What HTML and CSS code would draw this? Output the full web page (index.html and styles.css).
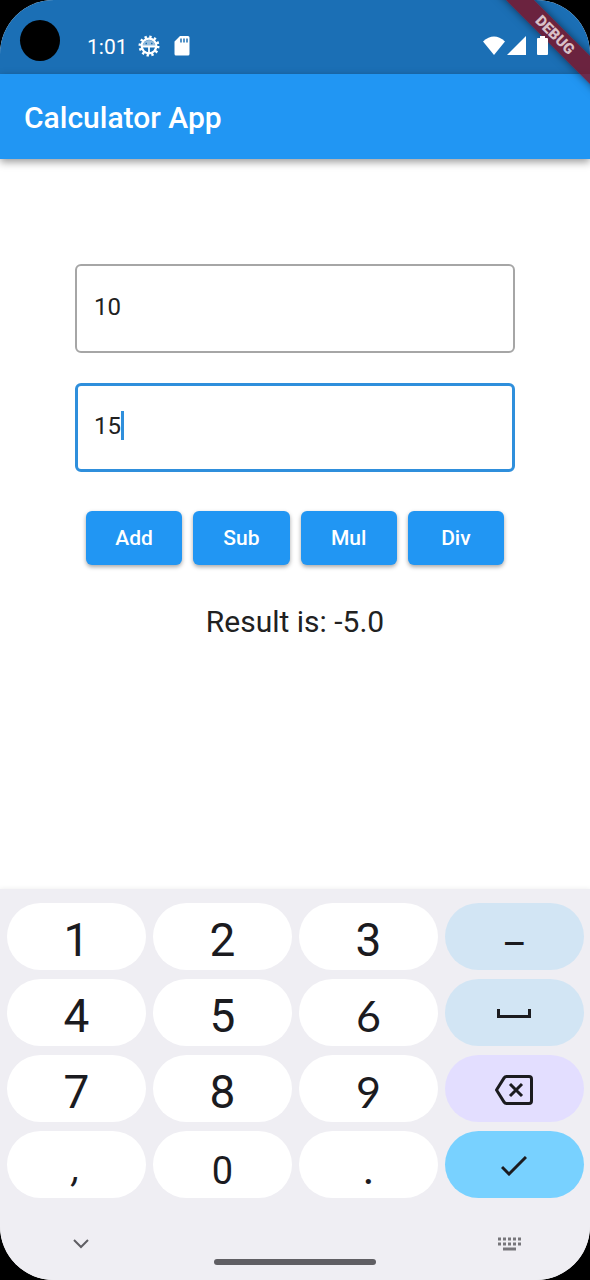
FILE: index.html
```html
<!DOCTYPE html>
<html lang="en">
<head>
<meta charset="utf-8">
<meta name="viewport" content="width=device-width, initial-scale=1">
<title>Calculator App</title>
<link rel="stylesheet" href="styles.css">
</head>
<body>
<div class="screen">
  <div class="status">
    <span class="camera"></span>
    <span class="time">1:01</span>
    <svg class="gear" viewBox="0 0 22 22" width="22" height="22" fill="none" stroke="#fff">
      <circle cx="11" cy="11" r="9" stroke-width="3" stroke-dasharray="2.3 2.412"/>
      <circle cx="11" cy="11" r="7.3" stroke-width="2.200"/>
      <path d="M4 11.500h14M11 11v7" stroke-width="1.8"/>
      <path fill="#fff" fill-opacity=".55" stroke="none" d="M4.500 11.500a6.500 6.500 0 0 1 13 0z"/>
      <path stroke="#1b6fb5" d="M7.500 8.500h1.500M13 8.500h1.500" stroke-width="1.3"/>
    </svg>
    <svg class="card" viewBox="0 0 16 20" width="16" height="20">
      <path fill="#fff" d="M6 0h8a1.500 1.500 0 0 1 1.500 1.500v16.500a1.500 1.500 0 0 1-1.500 1.500H2A1.500 1.500 0 0 1 .5 18V5.500z"/>
      <path stroke="#1b6fb5" stroke-width="1.500" d="M7 2.500v4M10 2.500v4M13 2.500v4"/>
    </svg>
    <span class="signals">
      <svg viewBox="0 0 22 20" width="22" height="20" fill="#fff"><path d="M0 5.500Q11-4.500 22 5.500L11 19z"/></svg>
      <svg viewBox="0 0 19 20" width="19" height="20" fill="#fff"><path d="M19 0v19H0z"/></svg>
      <svg class="battery" viewBox="0 0 11 20" width="11" height="20" fill="#fff"><path d="M3 0h5v2h2q1 0 1 1v15q0 1-1 1H1q-1 0-1-1V3q0-1 1-1h2z"/></svg>
    </span>
  </div>
  <header class="appbar"><h1>Calculator App</h1></header>
  <span class="debug">DEBUG</span>

  <main class="content">
    <div class="field">
      <input class="box" type="text" inputmode="decimal" value="10" aria-label="First number">
    </div>
    <div class="field">
      <input class="box box-active" type="text" inputmode="decimal" value="15" aria-label="Second number">
      <span class="caret"></span>
    </div>
    <div class="actions">
      <button class="action" type="button">Add</button>
      <button class="action" type="button">Sub</button>
      <button class="action" type="button">Mul</button>
      <button class="action" type="button">Div</button>
    </div>
    <p class="result">Result is: -5.0</p>
  </main>

  <section class="keyboard">
    <div class="keys">
      <button class="key" type="button">1</button>
      <button class="key" type="button">2</button>
      <button class="key" type="button">3</button>
      <button class="key key-blue key-minus" type="button">–</button>
      <button class="key" type="button">4</button>
      <button class="key" type="button">5</button>
      <button class="key key-slant" type="button">6</button>
      <button class="key key-blue key-icon" type="button" aria-label="Space">
        <svg viewBox="0 0 34 10" width="34" height="10" fill="none" stroke="#1b1b1f" stroke-width="3"><path d="M1.500 0v7.500h31V0"/></svg>
      </button>
      <button class="key" type="button">7</button>
      <button class="key" type="button">8</button>
      <button class="key key-slant" type="button">9</button>
      <button class="key key-lilac key-icon" type="button" aria-label="Backspace">
        <svg viewBox="0 0 38 30" width="38" height="30" fill="none" stroke="#1b1b1f" stroke-width="3"><path stroke-linejoin="round" d="M11.500 1.500H34q2.500 0 2.500 2.500v22q0 2.500-2.500 2.500H11.500q-1.500 0-2.400-1.400L1.500 15 9.100 2.900q.9-1.400 2.400-1.400z"/><path d="M15 9l12 12M27 9L15 21"/></svg>
      </button>
      <button class="key key-comma" type="button">,</button>
      <button class="key key-zero" type="button">0</button>
      <button class="key" type="button">.</button>
      <button class="key key-enter key-icon" type="button" aria-label="Done">
        <svg viewBox="0 0 26 20" width="26" height="20" fill="none" stroke="#1b1b1f" stroke-width="3"><path d="M1 11l7 7L25 1"/></svg>
      </button>
    </div>
    <div class="nav">
      <button class="nav-btn" type="button" aria-label="Hide keyboard">
        <svg viewBox="0 0 16 10" width="16" height="10" fill="none" stroke="#5f5e63" stroke-width="2"><path d="M1 1l7 7 7-7"/></svg>
      </button>
      <span class="home"></span>
      <button class="nav-btn nav-right" type="button" aria-label="Choose input method">
        <svg viewBox="0 0 23 14" width="23" height="14" fill="none" stroke="#77767b" stroke-width="3"><path stroke-dasharray="3 2" d="M0 2h23M0 7h23"/><path d="M5 12h13"/></svg>
      </button>
    </div>
  </section>
</div>
</body>
</html>
```

FILE: styles.css
```css
* { box-sizing: border-box; }
body {
  margin: 0;
  background: #000;
  font-family: Roboto, "Liberation Sans", sans-serif;
  color: #212121;
}
button, input { font: inherit; color: inherit; margin: 0; }
button { border: 0; padding: 0; cursor: pointer; }
svg { display: block; }

.screen {
  position: relative;
  display: flex;
  flex-direction: column;
  min-height: 100vh;
  overflow: hidden;
  border-radius: 54px;
  background: #fff;
}

.status {
  display: flex;
  align-items: center;
  height: 74px;
  padding: 18px 42px 0 87px;
  background: #1b6fb5;
  color: #fff;
}
.camera {
  position: absolute;
  top: 20px;
  left: 20px;
  width: 40px;
  height: 41px;
  border-radius: 50%;
  background: #000;
}
.time { padding-top: 2px; font-size: 21px; line-height: 28px; }
.gear { margin-left: 10px; }
.card { margin-left: 14px; }
.signals { position: relative; z-index: 2; display: flex; gap: 2px; margin-left: auto; }
.battery { margin-left: 9px; }

.appbar {
  display: flex;
  align-items: center;
  height: 85px;
  padding: 2px 24px 0;
  background: #2196f3;
  color: #fff;
  box-shadow: 0 3px 8px rgba(0, 0, 0, 0.4);
}
.appbar h1 { margin: 0; font-size: 30px; font-weight: 500; line-height: 36px; }

/* corner ribbon over the status and app bars */
.debug {
  position: absolute;
  top: 25px;
  right: -55px;
  z-index: 1;
  width: 180px;
  height: 20px;
  transform: rotate(45deg);
  background: rgba(130, 14, 30, 0.78);
  box-shadow: 0 0 9px rgba(0, 0, 0, 0.5);
  color: #d8c0c8;
  font-size: 15px;
  font-weight: 900;
  line-height: 20px;
  text-align: center;
}

.content {
  flex: 1;
  display: flex;
  flex-direction: column;
  padding: 105px 75px 0;
}
.field { position: relative; margin-bottom: 30px; }
.box {
  display: block;
  width: 100%;
  height: 89px;
  padding: 0 17px 4px;
  border: 2px solid #a6a6a6;
  border-radius: 6px;
  background: #fff;
  font-size: 24px;
  outline: 0;
}
.box-active { border: 3px solid #2f8fdc; padding: 0 16px 4px; }
.caret {
  position: absolute;
  top: 28px;
  left: 46px;
  width: 3px;
  height: 29px;
  background: #2f8fdc;
}
.actions {
  display: grid;
  grid-template-columns: repeat(4, 1fr);
  gap: 11px;
  margin-top: 9px;
  padding: 0 11px;
}
.action {
  height: 54px;
  border-radius: 6px;
  background: #2196f3;
  box-shadow: 0 2px 4px rgba(0, 0, 0, 0.35);
  color: #fff;
  font-size: 21px;
  font-weight: 500;
}
.result { margin: 39px 0; font-size: 30px; line-height: 36px; text-align: center; }

.keyboard {
  padding: 14px 6px 0 7px;
  background: #efeef3;
  box-shadow: 0 0 5px rgba(0, 0, 0, 0.08);
}
.keys {
  display: grid;
  grid-template-columns: repeat(4, 1fr);
  grid-auto-rows: 67px;
  gap: 9px 7px;
}
.key {
  display: flex;
  align-items: center;
  justify-content: center;
  padding-top: 6px;
  border-radius: 34px;
  background: #fff;
  color: #1b1b1f;
  font-size: 46px;
  line-height: 54px;
}
.key-slant { font-family: Lato, Roboto, sans-serif; font-size: 43px; }
.key-zero { font-size: 38px; padding-top: 12px; }
.key-comma { font-size: 38px; font-style: italic; }
.key-blue { background: #d2e5f4; }
.key-minus { padding-top: 14px; font-size: 38px; }
.key-lilac { background: #e3deff; }
.key-enter { background: #78d1ff; }
.key-icon { padding: 2px 2px 0 0; }

.nav {
  display: grid;
  grid-template-columns: 1fr 162px 1fr;
  height: 82px;
  padding: 36px 61px 15px 59px;
}
.nav-btn {
  display: flex;
  align-items: center;
  width: 30px;
  height: 20px;
  padding-left: 7px;
  background: none;
}
.nav-right { justify-self: end; justify-content: flex-end; padding: 0 2px 0 0; }
.home { align-self: end; height: 6px; border-radius: 3px; background: #5f5e63; }
```
